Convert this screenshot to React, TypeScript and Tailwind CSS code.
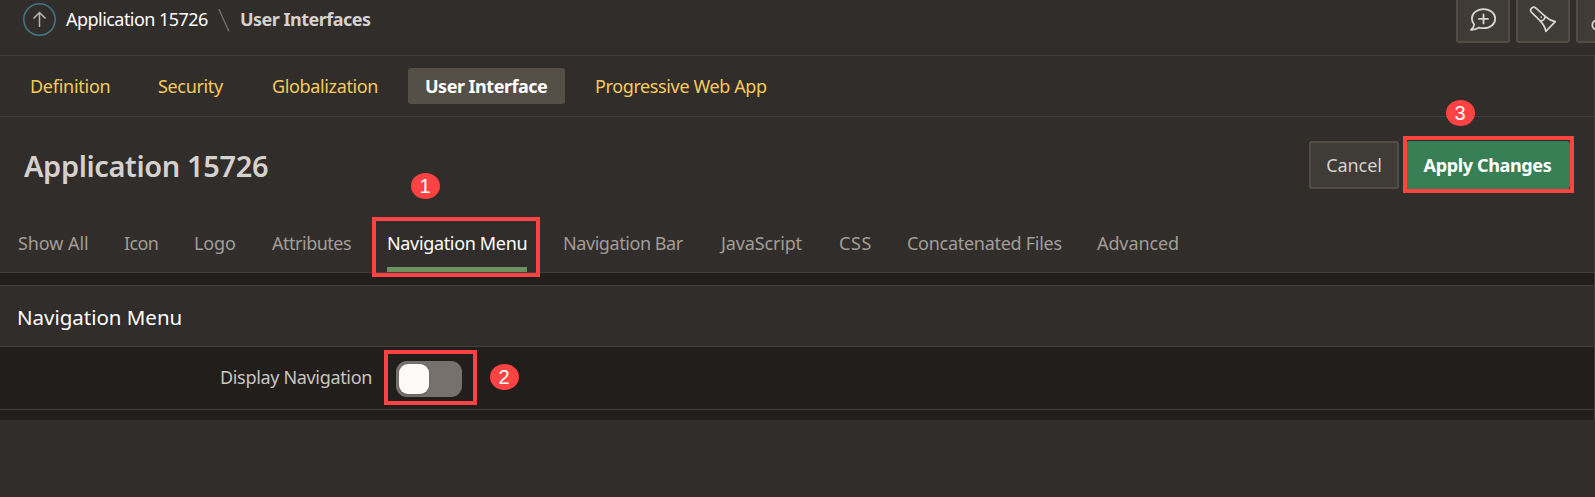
import type { ReactNode } from 'react';

const navLinks = [
  { label: 'Definition', box: 'ml-[30px] w-[80px] tracking-[-0.27px]' },
  { label: 'Security', box: 'ml-[48px] w-[67px] tracking-[-0.34px]' },
  { label: 'Globalization', box: 'ml-[47px] w-[107px] tracking-[-0.36px]' },
];

const tabs = [
  { label: 'Show All', box: 'ml-[18px] w-[71px] tracking-[-0.07px]' },
  { label: 'Icon', box: 'ml-[35px] w-[35px] tracking-[-0.6px]' },
  { label: 'Logo', box: 'ml-[35px] w-[43px] tracking-[-0.1px]' },
  { label: 'Attributes', box: 'ml-[35px] w-[80px] tracking-[-0.49px]' },
  { label: 'Navigation Menu', box: 'ml-[35px] w-[140px] tracking-[-0.34px]', active: true },
  { label: 'Navigation Bar', box: 'ml-[36px] w-[121px] tracking-[-0.43px]' },
  { label: 'JavaScript', box: 'ml-[37px] w-[82px] tracking-[-0.15px]' },
  { label: 'CSS', box: 'ml-[36px] w-[34px] tracking-[0.6px]' },
  { label: 'Concatenated Files', box: 'ml-[34px] w-[156px] tracking-[-0.28px]' },
  { label: 'Advanced', box: 'ml-[34px] w-[82px] tracking-[-0.1px]' },
];

function ToolButton({ children }: { children?: ReactNode }) {
  return (
    <button className="flex h-[46px] w-[54px] shrink-0 items-end justify-center rounded-[3px] border-2 border-[#514d46] bg-[#3f3b36]">
      {children}
    </button>
  );
}

function Step({ n, place }: { n: number; place: string }) {
  return (
    <span
      className={`absolute flex h-[26px] w-[29px] items-center justify-center rounded-[50%] bg-[#ff4242] font-['Liberation_Sans',sans-serif] text-[20px] leading-none text-white ${place}`}
    >
      {n}
    </span>
  );
}

function Highlight({ place }: { place: string }) {
  return <span className={`pointer-events-none absolute border-4 border-[#ff4242] ${place}`} />;
}

export default function App() {
  return (
    <div className="relative flex h-[497px] w-[1595px] flex-col overflow-hidden bg-[#312d2a] font-['Noto_Sans',sans-serif] text-[18px] leading-6 whitespace-nowrap">
      <header className="flex h-[56px] shrink-0 items-start border-b border-[#423e3b]">
        <svg className="mt-[3px] ml-[23px] h-[33px] w-[33px]" viewBox="0 0 33 33" fill="none">
          <circle cx="16.5" cy="16.5" r="15.7" stroke="#437282" strokeWidth="1.6" />
          <path d="M16.5 24V10M10.5 15.5l6-6 6 6" stroke="#b9b4b0" strokeWidth="1.5" />
        </svg>
        <a className="mt-[7px] ml-[10px] w-[144px] tracking-[-0.54px] text-white">Application 15726</a>
        <svg className="mt-[9px] ml-[8px] h-[23px] w-[12px]" viewBox="0 0 12 23">
          <path d="M.8 0L11 22.5" stroke="#77726e" strokeWidth="1.3" />
        </svg>
        <span className="mt-[7px] ml-[10px] w-[138px] font-bold tracking-[-0.51px] text-[#d5d1ce]">User Interfaces</span>
        <div className="-mt-[3px] ml-auto flex w-[139px] gap-[6px]">
          <ToolButton>
            <svg className="mb-[9px] h-[25px] w-[28px]" viewBox="0 0 28 25" fill="none" stroke="#d8d4d0" strokeWidth="1.8" strokeLinecap="round" strokeLinejoin="round">
              <path d="M5.2 17.5C3.7 15.8 2.9 13.8 2.9 11.7 2.9 6.3 8 2.2 14.6 2.2s11.600 4.100 11.600 9.500-5 9.500-11.600 9.500c-1.500 0-3-.2-4.400-.6-2.300 1.600-5 2.300-8.200 2.200 1.800-1.400 3-3.200 3.200-5.300z" />
              <path d="M14.500 7.400v9M10 11.900h9" />
            </svg>
          </ToolButton>
          <ToolButton>
            <svg className="mb-[8px] h-[28px] w-[28px]" viewBox="0 0 28 28" fill="none" stroke="#d8d4d0" strokeWidth="1.700" strokeLinecap="round" strokeLinejoin="round">
              <path d="M11.200 15.800L2.600 7.400A2.900 2.900 0 0 1 6.900 3.200L16.200 11.300" />
              <path d="M16.200 11.300C18.800 13.700 22 15.800 26.300 16.700L16.800 26.300C16.300 22.500 14 18.800 11.200 15.800C14 16 16.300 14 16.200 11.300Z" />
              <path d="M12.200 12h.1" />
            </svg>
          </ToolButton>
          <ToolButton>
            <svg className="mr-[13px] mb-[10px] h-[12px] w-[12px] shrink-0" viewBox="0 0 12 12" fill="none" stroke="#d8d4d0" strokeWidth="1.8">
              <circle cx="6" cy="6" r="4.700" />
            </svg>
          </ToolButton>
        </div>
      </header>

      <nav className="flex h-[61px] shrink-0 items-center border-r border-b border-[#423e3b] text-[#f6cb5c]">
        {navLinks.map((l) => (
          <a key={l.label} className={`shrink-0 ${l.box}`}>{l.label}</a>
        ))}
        <a className="ml-[29px] flex h-[36px] w-[157px] items-center rounded-[3px] bg-[#545048] pl-[17px] font-bold tracking-[-0.5px] text-white">
          User Interface
        </a>
        <a className="ml-[30px] tracking-[-0.38px]">Progressive Web App</a>
      </nav>

      <section className="flex h-[99px] shrink-0 items-start border-r border-[#423e3b]">
        <h1 className="mt-[29px] ml-[24px] text-[29px] leading-[40px] font-semibold tracking-[-0.38px] text-[#d5d1ce]">
          Application 15726
        </h1>
        <button className="mt-6 ml-auto h-[48px] w-[90px] rounded-[3px] border-2 border-[#514d46] bg-[#3f3b36] tracking-[-0.08px] text-[#d5d1ce]">
          Cancel
        </button>
        <button className="mt-6 mr-[24px] ml-[7px] h-[48px] w-[164px] rounded-[3px] bg-[#387f55] pr-[1px] font-bold tracking-[-0.35px] text-white">
          Apply Changes
        </button>
      </section>

      <div className="flex h-[57px] shrink-0 items-stretch border-r border-b border-[#423e3b] text-[#a19d99]">
        {tabs.map((t) => (
          <a
            key={t.label}
            className={`flex shrink-0 flex-col justify-between pt-[15px] ${t.box} ${t.active ? 'text-white' : ''}`}
          >
            {t.label}
            {t.active && <i className="h-[5px] w-full bg-[#6b9161]" />}
          </a>
        ))}
      </div>

      <main className="flex h-[147px] shrink-0 flex-col border-r border-[#423e3b] bg-[#221e1b] pt-3">
        <h2 className="h-[62px] shrink-0 border-y border-[#423e3b] bg-[#312d2a] pt-[19px] pl-[17px] text-[20.5px] tracking-[-0.02px] text-white">
          Navigation Menu
        </h2>
        <div className="flex h-[63px] shrink-0 items-center border-b border-[#423e3b]">
          <span className="-mt-[3px] ml-[220px] w-[176px] tracking-[-0.33px] text-[#c9c5c1]">Display Navigation</span>
          <span className="mt-[2px] flex h-[36px] w-[66px] rounded-[11px] bg-[#76716c] p-[3px]">
            <i className="h-[30px] w-[30px] rounded-[9px] bg-[#fcfbfa] shadow" />
          </span>
        </div>
      </main>

      <Highlight place="top-[217px] left-[372px] h-[60px] w-[168px]" />
      <Highlight place="top-[350px] left-[384px] h-[55px] w-[93px]" />
      <Highlight place="top-[136px] left-[1403px] h-[57px] w-[171px]" />
      <Step n={1} place="top-[173px] left-[410.500px]" />
      <Step n={2} place="top-[363.500px] left-[489.500px]" />
      <Step n={3} place="top-[99.500px] left-[1445.500px]" />
    </div>
  );
}
